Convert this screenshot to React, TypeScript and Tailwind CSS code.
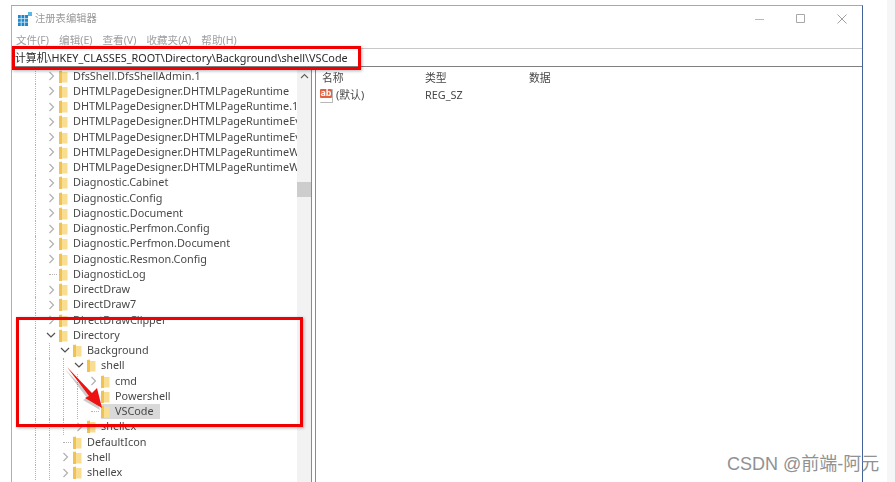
import React from 'react';

type RowProps = {
  label: string;
  depth?: number;
  state?: 'closed' | 'open' | 'leaf';
  guides?: number;
  selected?: boolean;
};

const rows: RowProps[] = [
  { label: 'DfsShell.DfsShellAdmin.1' },
  { label: 'DHTMLPageDesigner.DHTMLPageRuntime' },
  { label: 'DHTMLPageDesigner.DHTMLPageRuntime.1' },
  { label: 'DHTMLPageDesigner.DHTMLPageRuntimeEvents' },
  { label: 'DHTMLPageDesigner.DHTMLPageRuntimeEvents.1' },
  { label: 'DHTMLPageDesigner.DHTMLPageRuntimeWindow' },
  { label: 'DHTMLPageDesigner.DHTMLPageRuntimeWindow.1' },
  { label: 'Diagnostic.Cabinet' },
  { label: 'Diagnostic.Config' },
  { label: 'Diagnostic.Document' },
  { label: 'Diagnostic.Perfmon.Config' },
  { label: 'Diagnostic.Perfmon.Document' },
  { label: 'Diagnostic.Resmon.Config' },
  { label: 'DiagnosticLog', state: 'leaf' },
  { label: 'DirectDraw' },
  { label: 'DirectDraw7' },
  { label: 'DirectDrawClipper' },
  { label: 'Directory', state: 'open' },
  { label: 'Background', depth: 1, state: 'open', guides: 2 },
  { label: 'shell', depth: 2, state: 'open', guides: 3 },
  { label: 'cmd', depth: 3, guides: 4 },
  { label: 'Powershell', depth: 3, state: 'leaf', guides: 4 },
  { label: 'VSCode', depth: 3, state: 'leaf', guides: 4, selected: true },
  { label: 'shellex', depth: 2, guides: 3 },
  { label: 'DefaultIcon', depth: 1, state: 'leaf', guides: 2 },
  { label: 'shell', depth: 1, guides: 2 },
  { label: 'shellex', depth: 1, guides: 2 },
];

function Folder() {
  return (
    <svg width="9" height="13" viewBox="0 0 9 13" className="shrink-0">
      <path d="M0 2h8.5v10.5H0z" fill="#f9dd90" />
      <path d="M0 1l3 -.5v12.5H0z" fill="#f0c254" />
    </svg>
  );
}

function TreeRow({ label, depth = 0, state = 'closed', guides = 1, selected }: RowProps) {
  return (
    <div className="flex h-[15.25px] shrink-0 items-center pl-[17px]">
      {[0, 1, 2, 3].slice(0, depth + 1).map((i) => (
        <div key={i} className="h-full w-[14px] shrink-0">
          {i < guides && <div className="ml-[6px] h-full border-l border-dotted border-[#b4b4b4]" />}
        </div>
      ))}
      <div className="flex h-full w-[16px] shrink-0 items-center justify-center">
        {state === 'closed' && (
          <svg width="7" height="10" viewBox="0 0 7 10">
            <path d="M1.5 1l4 4-4 4" fill="none" stroke="#b0b0b0" strokeWidth="1.2" />
          </svg>
        )}
        {state === 'open' && (
          <svg width="10" height="7" viewBox="0 0 10 7">
            <path d="M1 1l4 4 4-4" fill="none" stroke="#505050" strokeWidth="1.2" />
          </svg>
        )}
        {state === 'leaf' && <div className="ml-[4px] w-[8px] border-t border-dotted border-[#b4b4b4]" />}
      </div>
      <div className={`flex h-full items-center gap-[5px] pr-[6px] ${selected ? 'bg-[#d9d9d9]' : ''}`}>
        <Folder />
        <span className="whitespace-nowrap text-[#484848]">{label}</span>
      </div>
    </div>
  );
}

function RedBox({ className }: { className: string }) {
  return <div className={`absolute border-[3px] border-[#f00000] shadow-[1px_1px_3px_rgba(0,0,0,0.3)] ${className}`} />;
}

export default function App() {
  return (
    <div
      className="relative flex h-[482px] w-[895px] overflow-hidden bg-white text-[10.85px] leading-none"
      style={{ fontFamily: '"Noto Sans", "Noto Sans CJK SC", sans-serif' }}
    >
      <div className="mt-[5px] ml-[11px] flex h-[477px] w-[852px] shrink-0 flex-col border-t border-r border-l border-t-[#a8a8a8] border-r-[#44639a] border-l-[#b0b0b0] blur-[0.4px]">
        {/* title bar */}
        <div className="flex h-[24px] shrink-0 items-center pt-[1px] pl-[6px] text-[#9a9a9a]">
          <svg width="14" height="14" viewBox="0 0 14 14" className="shrink-0">
            <path d="M0 3h10v11H0z" fill="#1f86c8" />
            <path d="M3.2 3v11M6.6 3v11M0 6.6h10M0 10.2h10" stroke="#d8eef9" strokeWidth="0.8" />
            <path d="M10 0h4v4h-4z" fill="#58b7e6" />
          </svg>
          <span className="ml-[3px] text-[10.3px]">注册表编辑器</span>
          <div className="ml-auto flex items-center gap-[31px] pr-[15px]">
            <svg width="10" height="10" viewBox="0 0 10 10"><path d="M0 5.5h9" stroke="#b8b8b8" /></svg>
            <svg width="10" height="10" viewBox="0 0 10 10"><path d="M.5.5h8v8h-8z" fill="none" stroke="#a8a8a8" /></svg>
            <svg width="10" height="10" viewBox="0 0 10 10"><path d="M.5.5l9 9M9.5.5l-9 9" stroke="#a0a0a0" /></svg>
          </div>
        </div>
        {/* menu */}
        <div className="flex h-[18px] shrink-0 items-center gap-[10px] pt-[3px] pl-[4px] text-[10.6px] text-[#a0a0a0]">
          <span>文件(F)</span>
          <span>编辑(E)</span>
          <span>查看(V)</span>
          <span>收藏夹(A)</span>
          <span>帮助(H)</span>
        </div>
        {/* address bar */}
        <div className="flex h-[19px] shrink-0 items-center border-t border-b border-t-[#c8c8c8] border-b-[#808080] pt-[2px] pl-[3px] text-[#2a2a2a]">
          计算机\HKEY_CLASSES_ROOT\Directory\Background\shell\VSCode
        </div>
        <div className="flex min-h-0 flex-1">
          {/* tree */}
          <div className="flex w-[285px] shrink-0 flex-col overflow-hidden pt-[1.5px]">
            {rows.map((row, i) => (
              <TreeRow key={i} {...row} />
            ))}
          </div>
          {/* scrollbar */}
          <div className="flex w-[14px] shrink-0 flex-col items-center bg-[#f2f2f2] pt-[6px]">
            <svg width="9" height="6" viewBox="0 0 9 6">
              <path d="M1 5l3.5-3.5L8 5" fill="none" stroke="#606060" strokeWidth="1.1" />
            </svg>
            <div className="mt-[103px] h-[15px] w-full bg-[#cdcdcd]" />
          </div>
          {/* splitter */}
          <div className="w-[5px] shrink-0 border-r border-l border-[#8c8c8c]" />
          {/* values */}
          <div className="min-w-0 flex-1 text-[#484848]">
            <div className="flex h-[21px] items-center pt-[1px] pl-[6px]">
              <span className="w-[103px]">名称</span>
              <span className="w-[104px]">类型</span>
              <span>数据</span>
            </div>
            <div className="flex h-[15px] items-center pl-[4px]">
              <div className="h-[14px] w-[13px] rounded-[1px] border-r border-b border-[#b8b8b8] bg-white">
                <div className="flex h-[9px] items-center justify-center rounded-[1px] bg-[#e4623f] pb-[2px] text-[9px] font-bold text-white">
                  ab
                </div>
              </div>
              <span className="ml-[3px] w-[89px]">(默认)</span>
              <span>REG_SZ</span>
            </div>
          </div>
        </div>
      </div>
      <div className="flex-1" />
      <div className="w-[8px] shrink-0 bg-[#f5f6f8]" />

      {/* annotations drawn over the screenshot */}
      <RedBox className="top-[46px] left-[12px] h-[24px] w-[349px]" />
      <RedBox className="top-[317px] left-[16px] h-[110px] w-[287px]" />
      <svg width="50" height="54" viewBox="0 0 50 54" className="absolute top-[362px] left-[62px]">
        <path d="M5 5L30 31 35 26 40 46 23 36 27 34z" fill="#000" opacity="0.2" transform="translate(-2 2)" />
        <path d="M5 5L30 31 35 26 40 46 23 36 27 34z" fill="#ee1111" />
      </svg>
      <div
        className="absolute top-[454px] left-[727px] text-[18px] leading-[20px] whitespace-nowrap text-[#919191]"
        style={{ fontFamily: '"Liberation Sans", "Noto Sans CJK SC", sans-serif' }}
      >
        CSDN @前端-阿元
      </div>
    </div>
  );
}
